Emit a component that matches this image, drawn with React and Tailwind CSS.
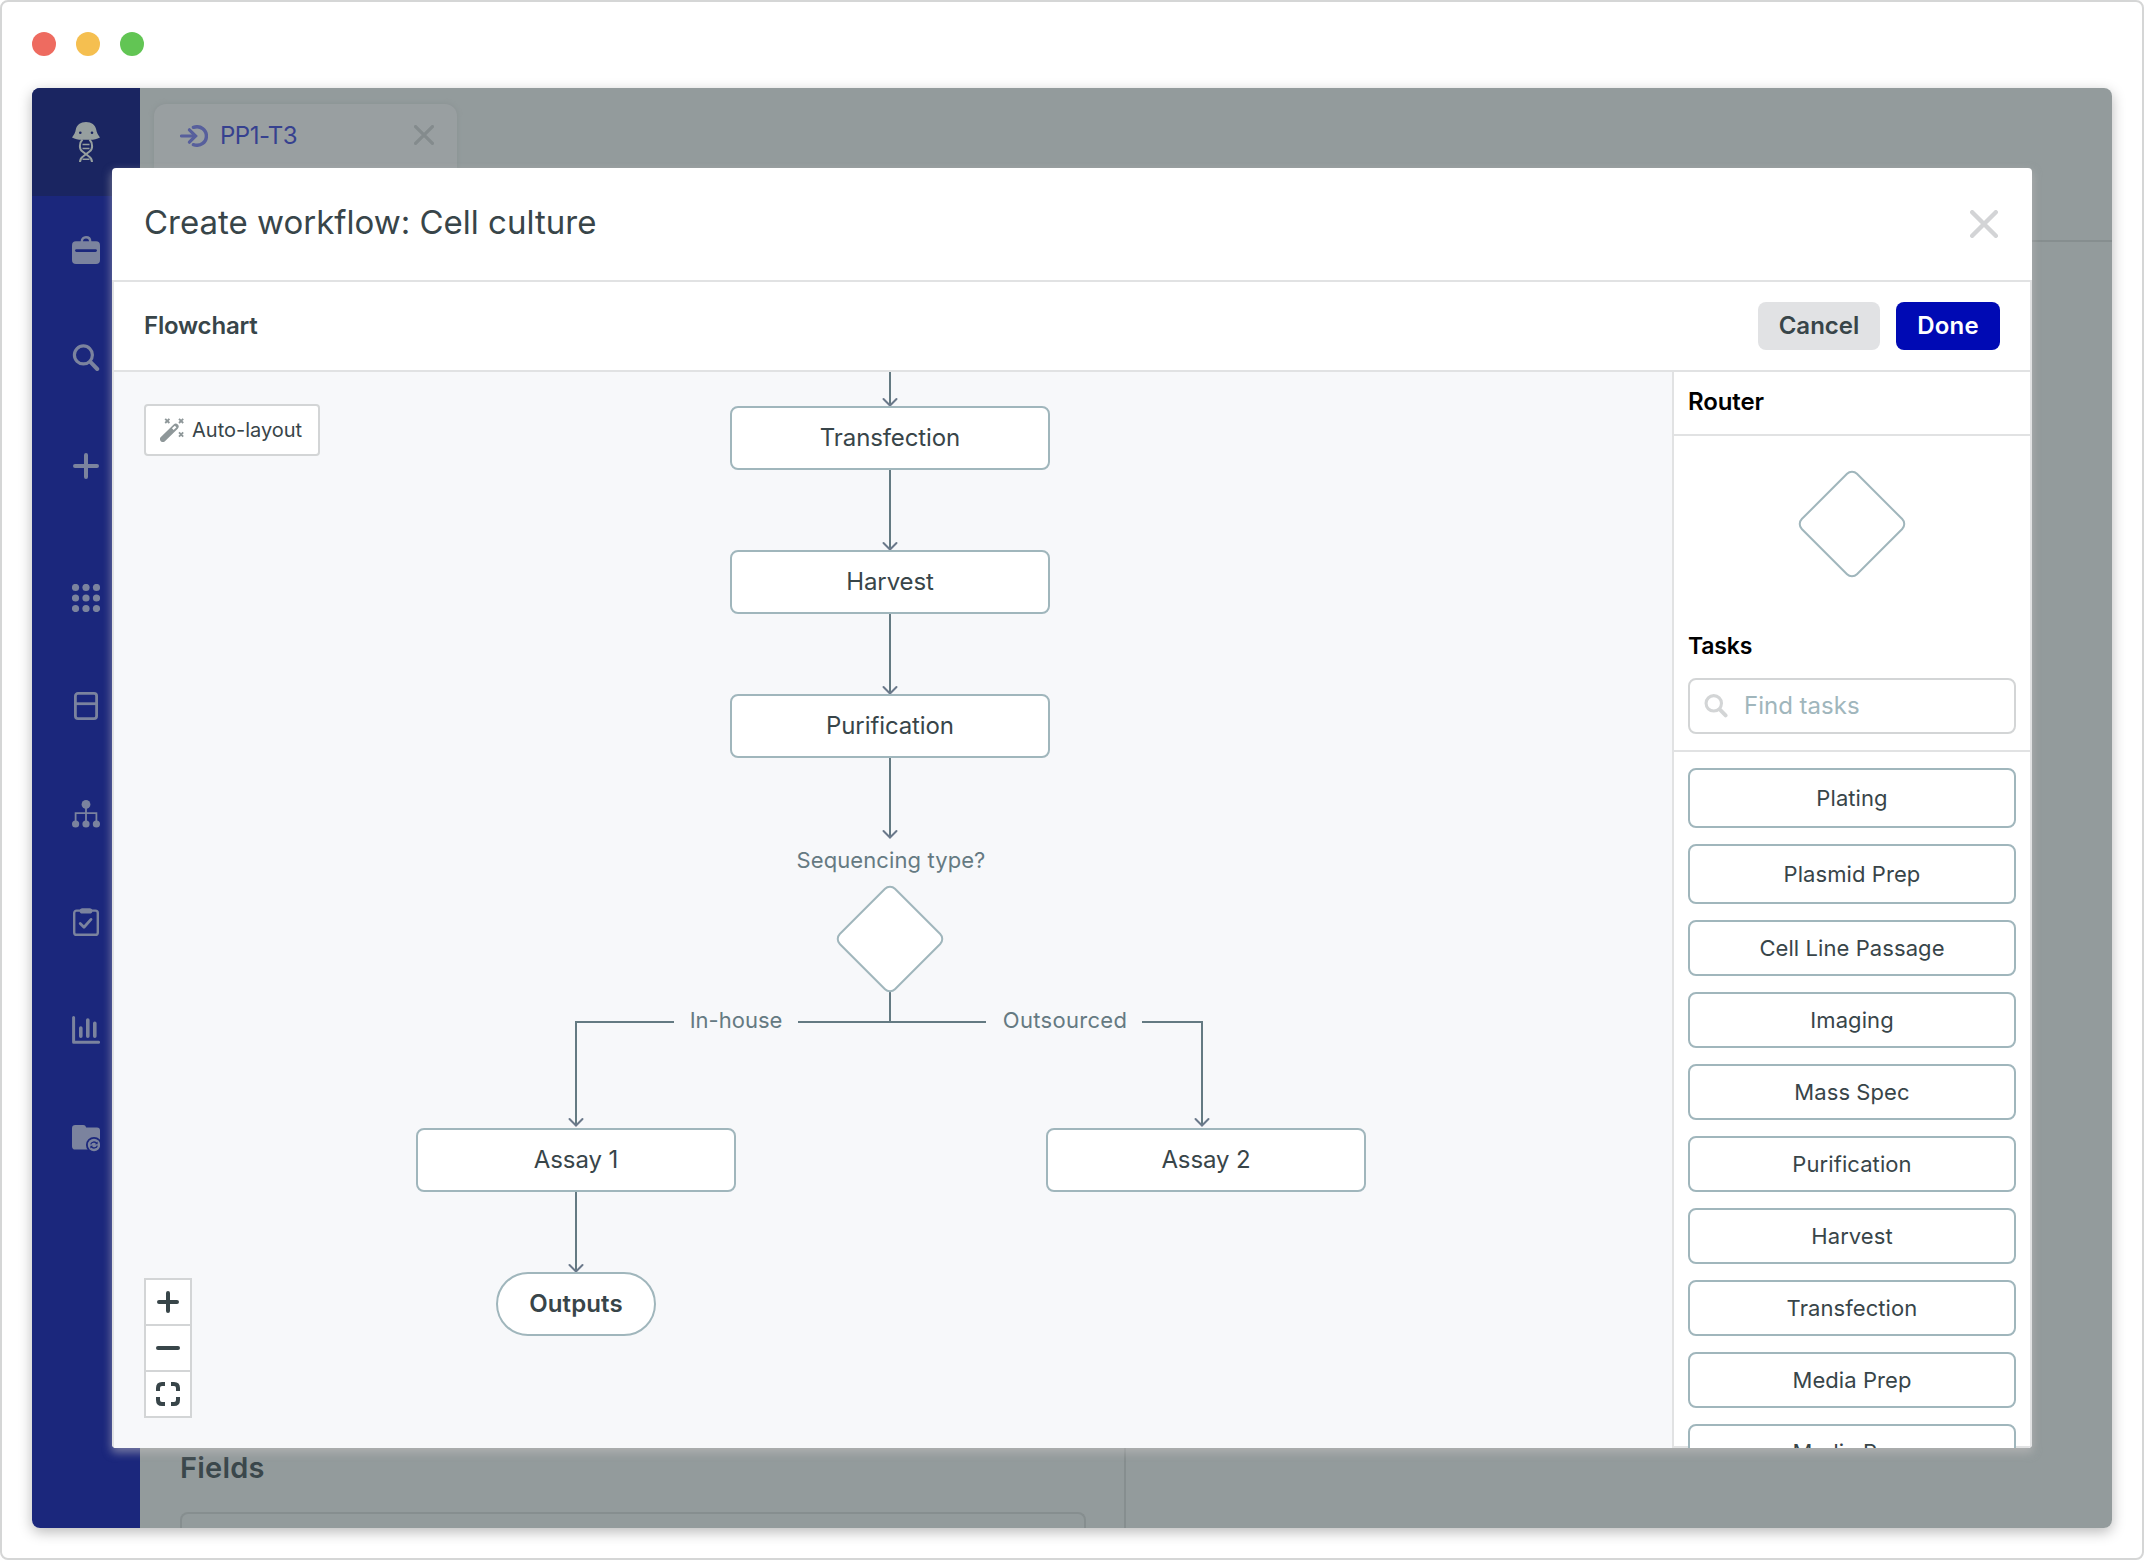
// src/App.jsx

import React from 'react';

const tasks = [
  { name: 'Plating', size: 'h-[60px]' },
  { name: 'Plasmid Prep', size: 'h-[60px]' },
  { name: 'Cell Line Passage', size: 'h-14' },
  { name: 'Imaging', size: 'h-14' },
  { name: 'Mass Spec', size: 'h-14' },
  { name: 'Purification', size: 'h-14' },
  { name: 'Harvest', size: 'h-14' },
  { name: 'Transfection', size: 'h-14' },
  { name: 'Media Prep', size: 'h-14' },
  { name: 'Media Prep', size: 'h-14' },
];

// Task nodes on the flowchart canvas
const nodes = [
  { name: 'Transfection', pos: 'left-[616px] top-[34px]' },
  { name: 'Harvest', pos: 'left-[616px] top-[178px]' },
  { name: 'Purification', pos: 'left-[616px] top-[322px]' },
  { name: 'Assay 1', pos: 'left-[302px] top-[756px]' },
  { name: 'Assay 2', pos: 'left-[932px] top-[756px]' },
];

// Tips of the arrows on the canvas
const arrows = [
  [776, 34],
  [776, 178],
  [776, 322],
  [776, 466],
  [462, 754],
  [1088, 754],
  [462, 900],
];

// --- Icons ---

const Logo = () => (
  <svg width="28" height="40" viewBox="0 0 28 40" fill="none">
    <path
      d="M14 0C8.5 0 4.6 3 3.8 7.5C3.3 10.6 2 13 0 15.4C3 17 6.3 17.7 9.6 17.8H18.4C21.7 17.7 25 17 28 15.4C26 13 24.7 10.6 24.2 7.5C23.4 3 19.5 0 14 0Z"
      fill="#969f9f"
    />
    <circle cx="8.3" cy="10.8" r="1.3" fill="#1a2561" />
    <circle cx="20" cy="10.8" r="1.3" fill="#1a2561" />
    <g stroke="#969f9f" strokeWidth="2">
      <path d="M10.5 17.5C7 21 7 27 10.5 29.5L17 34.5C19.5 36.3 20 38 20 40" />
      <path d="M17.5 17.5C21 21 21 27 17.5 29.5L11 34.5C8.5 36.3 8 38 8 40" />
      <path d="M10.5 22.5H17.5M10.5 26.5H17.5M10.5 37.3H17.5" strokeWidth="1.6" />
    </g>
  </svg>
);

const BriefcaseIcon = () => (
  <svg width="28" height="28" viewBox="0 0 28 28" fill="none">
    <path d="M9.8 6.5V5.5C9.8 3 11.5 1.3 14 1.3S18.2 3 18.2 5.5V6.5" stroke="#7b839e" strokeWidth="2.4" />
    <rect y="5.3" width="28" height="22.7" rx="4" fill="#7b839e" />
    <path d="M4.4 14.6H23.6" stroke="#1b277c" strokeWidth="2.6" strokeLinecap="round" />
  </svg>
);

const SearchIcon = ({ size, color, stroke }) => (
  <svg width={size} height={size} viewBox="0 0 28 28" fill="none" stroke={color} strokeWidth={stroke} strokeLinecap="round">
    <circle cx="11.4" cy="10.9" r="9" />
    <path d="M18.6 18.2L25.2 25" strokeWidth={stroke * 1.25} />
  </svg>
);

const PlusIcon = () => (
  <svg width="28" height="28" viewBox="0 0 28 28" stroke="#7b839e" strokeWidth="4" strokeLinecap="round">
    <path d="M14 3V25M3 14H25" />
  </svg>
);

const GridIcon = () => (
  <svg width="28" height="28" viewBox="0 0 28 28" fill="#7b839e">
    {[3.5, 14, 24.5].map((y) => [3.5, 14, 24.5].map((x) => <circle key={`${x}-${y}`} cx={x} cy={y} r="3.6" />))}
  </svg>
);

const InventoryIcon = () => (
  <svg width="28" height="28" viewBox="0 0 28 28" fill="none" stroke="#7b839e" strokeWidth="2.8">
    <rect x="3.4" y="1.4" width="21.2" height="25.2" rx="2.6" />
    <path d="M3.4 11.7H24.6" />
  </svg>
);

const HierarchyIcon = () => (
  <svg width="28" height="28" viewBox="0 0 28 28" fill="#7b839e">
    <circle cx="14" cy="4.4" r="4.4" />
    <circle cx="3.6" cy="24" r="3.6" />
    <circle cx="14" cy="24" r="3.6" />
    <circle cx="24.4" cy="24" r="3.6" />
    <path d="M14 4V24M3.6 24V13.2H24.4V24" fill="none" stroke="#7b839e" strokeWidth="1.8" />
  </svg>
);

const ClipboardIcon = () => (
  <svg width="28" height="28" viewBox="0 0 28 28" fill="none" stroke="#7b839e" strokeLinecap="round" strokeLinejoin="round">
    <rect x="2.2" y="2.6" width="23.6" height="24.2" rx="2.4" strokeWidth="2.4" />
    <path d="M10.4 2.9H17.6" strokeWidth="5.4" />
    <path d="M8.2 15.4L12 19.2L19 11.4" strokeWidth="2.8" />
  </svg>
);

const ChartIcon = () => (
  <svg width="28" height="28" viewBox="0 0 28 28" fill="none" stroke="#7b839e" strokeLinecap="round">
    <path d="M1.6 1.6V26.3H26.6" strokeWidth="3" strokeLinejoin="round" />
    <path d="M8.8 12V20.2M15.8 4V20.2M22.8 7.2V20.2" strokeWidth="3.6" />
  </svg>
);

const FolderSyncIcon = () => (
  <svg width="28" height="28" viewBox="0 0 28 28" fill="none">
    <path d="M0 4.2C0 2 1.3 1 3.2 1H11.2C12.8 1 13.6 1.7 14.2 3.6H25C27 3.6 28 4.8 28 6.6V25.6H3.2C1.3 25.6 0 24.4 0 22.4Z" fill="#7b839e" />
    <circle cx="22" cy="21" r="8" fill="#1b277c" />
    <circle cx="22" cy="21" r="6.2" fill="#7b839e" />
    <path d="M18.7 20.4C19.4 17.8 23 17.1 24.8 19.4M25.3 21.6C24.6 24.2 21 24.9 19.2 22.6" stroke="#1b277c" strokeWidth="1.3" />
    <path d="M25.6 17.6V20.3H22.9ZM18.4 24.4V21.7H21.1Z" fill="#1b277c" />
  </svg>
);

const CloseIcon = ({ size, color, stroke }) => (
  <svg width={size} height={size} viewBox="0 0 28 28" stroke={color} strokeWidth={stroke} strokeLinecap="round">
    <path d="M2.2 2.2L25.8 25.8M25.8 2.2L2.2 25.8" />
  </svg>
);

const EntryIcon = () => (
  <svg width="28" height="22" viewBox="0 0 28 22" fill="none" stroke="#575f9c" strokeLinecap="round">
    <path d="M1.4 11H15" strokeWidth="3" />
    <path d="M9.4 4.8L15.6 11L9.4 17.2" strokeWidth="3.2" />
    <path d="M13.4 2.3C20.8 0 26.4 5 26.4 11S20.8 22 13.4 19.7" strokeWidth="3.4" />
  </svg>
);

const WandIcon = () => (
  <svg width="24" height="24" viewBox="0 0 24 24" fill="none">
    <path d="M2.9 21.1L15.7 8.6" stroke="#8e9799" strokeWidth="5.8" strokeLinecap="round" />
    <path d="M12.8 11.2L15.6 8.5" stroke="#fff" strokeWidth="2.4" />
    <path
      d="M5.2 .8L9.4 5M9.4 .8L5.2 5M19 .8L23.2 5M23.2 .8L19 5M19 14.4L23.2 18.6M23.2 14.4L19 18.6"
      stroke="#8e9799"
      strokeWidth="1.8"
    />
  </svg>
);

const Diamond = ({ className }) => (
  <div className={`size-20 rotate-45 rounded-lg border-2 border-[#a0b6bc] bg-white ${className}`} />
);

const sidebarIcons = [
  <BriefcaseIcon />,
  <SearchIcon size={28} color="#7b839e" stroke={3.2} />,
  <PlusIcon />,
  <GridIcon />,
  <InventoryIcon />,
  <HierarchyIcon />,
  <ClipboardIcon />,
  <ChartIcon />,
  <FolderSyncIcon />,
];

// --- Page behind the dialog ---

const Sidebar = () => (
  <nav className="flex w-[108px] shrink-0 flex-col bg-[#1b277c]">
    <div className="flex h-[108px] items-center justify-center bg-[#1a2561]">
      <Logo />
    </div>
    {sidebarIcons.map((icon, i) => (
      <button key={i} className={`flex h-[108px] items-center justify-center ${i === 3 ? 'mt-6' : ''}`}>
        {icon}
      </button>
    ))}
  </nav>
);

const Page = () => (
  <main className="flex flex-1 flex-col bg-[#939b9c]">
    <div className="h-[154px] border-b-2 border-[#868e8f] px-3.5 pt-4">
      <div className="flex h-[100px] w-[303px] items-start rounded-t-xl bg-[#999fa1] pt-[21px] pr-[23px] pl-[26px] shadow-[0_0_4px_1px_#8c9495]">
        <EntryIcon />
        <span className="-mt-[3px] ml-3 flex-1 text-[24px] leading-7 tracking-[-0.5px] text-[#36418f]">PP1-T3</span>
        <CloseIcon size={20} color="#848b8d" stroke={4.6} />
      </div>
    </div>
    <div className="flex flex-1">
      <section className="flex w-[986px] flex-col justify-end border-r-2 border-[#868e8f] pr-[38px] pl-10">
        <h2 className="mb-[26px] text-[29px] leading-9 font-semibold tracking-[0.2px] text-[#3a474b]">Fields</h2>
        <div className="h-4 rounded-t-lg border-2 border-b-0 border-[#868e8f]" />
      </section>
    </div>
  </main>
);

// --- Flowchart ---

const Canvas = () => (
  <div className="relative flex-1 overflow-hidden bg-[#f7f8fa]">
    <svg className="absolute top-0 left-0" width="1558" height="1076" fill="none" stroke="#647a82" strokeWidth="2">
      <path d="M776 0V34M776 98V178M776 242V322M776 386V466M776 618V650" />
      <path d="M560 650H462V753M684 650H872M1028 650H1088V753M462 820V900" />
      {arrows.map(([x, y]) => (
        <path key={`${x}-${y}`} d={`M${x - 6.5} ${y - 7}L${x} ${y - 0.5}L${x + 6.5} ${y - 7}`} stroke="#6a788a" strokeLinecap="round" />
      ))}
    </svg>

    {nodes.map(({ name, pos }) => (
      <div
        key={name}
        className={`absolute flex h-16 w-80 items-center justify-center rounded-lg border-2 border-[#a0b6bc] bg-white text-[24px] tracking-[-0.1px] ${pos}`}
      >
        {name}
      </div>
    ))}
    <div className="absolute top-[900px] left-[382px] flex h-16 w-40 items-center justify-center rounded-full border-2 border-[#a0b6bc] bg-white text-[24px] font-semibold tracking-[0.1px]">
      Outputs
    </div>
    <Diamond className="absolute top-[527px] left-[736px]" />

    <span className="absolute top-[488px] left-[777px] -translate-1/2 text-[22px] tracking-[0.1px] whitespace-nowrap text-[#657a82]">Sequencing type?</span>
    <span className="absolute top-[648px] left-[622px] -translate-1/2 text-[22px] text-[#657a82]">In-house</span>
    <span className="absolute top-[648px] left-[951px] -translate-1/2 text-[22px] tracking-[0.3px] text-[#657a82]">Outsourced</span>

    <button className="absolute top-8 left-[30px] flex h-[52px] w-44 items-center gap-2 rounded border-2 border-[#d3d5d6] bg-white pl-3.5">
      <WandIcon />
      <span className="pb-px text-[20px]">Auto-layout</span>
    </button>

    {/* Zoom controls */}
    <div className="absolute top-[906px] left-[30px] flex w-12 flex-col divide-y-2 divide-[#d3d5d6] border-2 border-[#d3d5d6] bg-white">
      <button className="flex h-[46px] items-center justify-center">
        <svg width="24" height="24" viewBox="0 0 24 24" stroke="#384549" strokeWidth="4" strokeLinecap="round">
          <path d="M12 3V21M3 12H21" />
        </svg>
      </button>
      <button className="flex h-[46px] items-center justify-center">
        <svg width="24" height="24" viewBox="0 0 24 24" stroke="#384549" strokeWidth="4" strokeLinecap="round">
          <path d="M2 12H22" />
        </svg>
      </button>
      <button className="flex h-11 items-center justify-center">
        <svg width="24" height="24" viewBox="0 0 24 24" fill="none" stroke="#384549" strokeWidth="4">
          <path d="M2 9V6C2 3.5 3.5 2 6 2H9M15 2H18C20.5 2 22 3.5 22 6V9M22 15V18C22 20.5 20.5 22 18 22H15M9 22H6C3.5 22 2 20.5 2 18V15" />
        </svg>
      </button>
    </div>
  </div>
);

const TaskPanel = () => (
  <aside className="flex w-[358px] shrink-0 flex-col border-b-2 border-l-2 border-[#e1e2e3] bg-white">
    <h3 className="flex h-16 shrink-0 items-center border-b-2 border-[#e1e2e3] px-3.5 pb-0.5 text-[24px] font-semibold tracking-[-0.1px] text-black">Router</h3>
    <div className="flex h-[177px] shrink-0 items-center justify-center pb-px">
      <Diamond className="" />
    </div>
    <div className="shrink-0 border-b-2 border-[#e1e2e3] px-3.5 pb-4">
      <h3 className="flex h-[65px] items-center pt-px text-[23px] font-semibold tracking-[-0.2px] text-black">Tasks</h3>
      <div className="flex h-14 items-center rounded-lg border-2 border-[#d3d5d6] pl-3.5">
        <SearchIcon size={24} color="#d3d5d6" stroke={3.6} />
        <span className="pb-px pl-4 text-[24px] text-[#a0b6bc]">Find tasks</span>
      </div>
    </div>
    <div className="flex min-h-0 flex-1 flex-col gap-4 px-3.5 pt-4">
      {tasks.map(({ name, size }, i) => (
        <button
          key={i}
          className={`flex shrink-0 items-center justify-center rounded-lg border-2 border-[#a0b6bc] bg-white text-[22px] tracking-[0.08px] ${size}`}
        >
          {name}
        </button>
      ))}
    </div>
  </aside>
);

const WorkflowDialog = () => (
  <div className="absolute top-20 left-20 h-[1280px] w-[1920px] rounded shadow-[0_4px_8px_1px_rgba(200,196,196,0.5)]">
    <div className="flex h-full flex-col overflow-hidden rounded bg-white text-[#384549]">
      <header className="flex h-28 shrink-0 items-center justify-between pr-[34px] pl-8">
        <h1 className="pb-0.5 text-[33px]">Create workflow: Cell culture</h1>
        <CloseIcon size={28} color="#d3d4d6" stroke={4.4} />
      </header>
      <div className="flex min-h-0 flex-1 flex-col border-2 border-b-0 border-[#e1e2e3]">
        <div className="flex h-[90px] shrink-0 items-center justify-between border-b-2 border-[#e1e2e3] px-[30px]">
          <h2 className="text-[24px] font-semibold tracking-[-0.2px]">Flowchart</h2>
          <div className="flex gap-4">
            <button className="h-12 w-[122px] rounded-lg bg-[#e1e2e4] pb-px text-[24px] font-semibold">Cancel</button>
            <button className="h-12 w-[104px] rounded-lg bg-[#000ab4] pb-px text-[24px] font-semibold tracking-[0.2px] text-white">Done</button>
          </div>
        </div>
        <div className="flex min-h-0 flex-1">
          <Canvas />
          <TaskPanel />
        </div>
      </div>
    </div>
  </div>
);

export default function App() {
  return (
    <div className="flex h-[1560px] w-[2144px] flex-col rounded-lg border-2 border-[#d5d6d6] bg-white px-[30px] pt-[30px] font-['Inter',sans-serif]">
      {/* Window buttons */}
      <div className="flex gap-5">
        <span className="size-6 rounded-full bg-[#ee6b60]" />
        <span className="size-6 rounded-full bg-[#f5bf50]" />
        <span className="size-6 rounded-full bg-[#62c554]" />
      </div>
      <div className="relative mt-8 h-[1440px] rounded-lg shadow-[0_4px_14px_rgba(0,0,0,0.28)]">
        <div className="flex h-full overflow-hidden rounded-lg">
          <Sidebar />
          <Page />
        </div>
        <WorkflowDialog />
      </div>
    </div>
  );
}
